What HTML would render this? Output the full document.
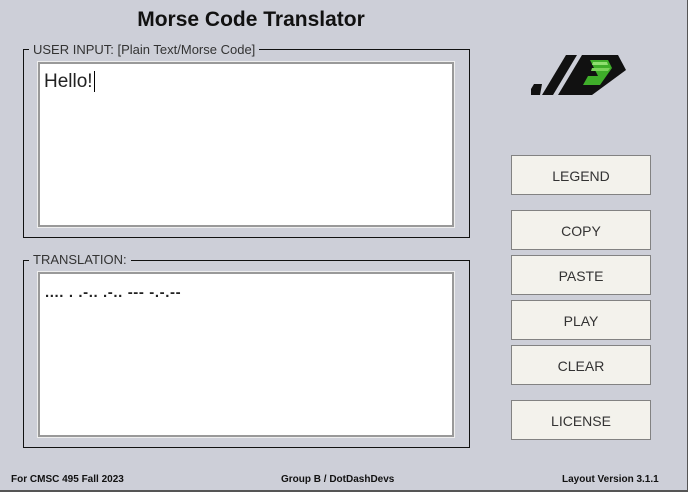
<!DOCTYPE html>
<html><head><style>
body{margin:0;width:688px;height:492px;background:#cdcfd8;font-family:"Liberation Sans",sans-serif;position:relative;overflow:hidden;box-sizing:border-box;border-right:1px solid #555;border-bottom:2px solid #555}
.a{position:absolute}
.title{left:0;width:502px;top:8px;text-align:center;font-weight:bold;font-size:21px;color:#111}
.grp{border:1.5px solid #111;box-sizing:border-box}
.lbl{background:#cdcfd8;font-size:13px;color:#333;padding:0 4px}
.box{background:#fff;border:2px solid #999;box-sizing:border-box;outline:1px solid #eee}
.btn{left:511px;width:140px;height:40px;background:#f3f2ec;border:1px solid #828282;box-sizing:border-box;text-align:center;line-height:40px;font-size:14px;color:#333}
.f{top:474px;font-size:10px;font-weight:bold;color:#111}
</style></head><body>
<div class="a title">Morse Code Translator</div>
<div class="a grp" style="left:23px;top:49px;width:447px;height:189px"></div>
<div class="a lbl" style="left:29px;top:42px">USER INPUT: [Plain Text/Morse Code]</div>
<div class="a box" style="left:38px;top:62px;width:416px;height:165px"></div>
<div class="a" style="left:44px;top:71px;font-size:19px;color:#222">Hello!<span style="border-left:1px solid #000;margin-left:1px"></span></div>
<div class="a grp" style="left:23px;top:260px;width:447px;height:188px"></div>
<div class="a lbl" style="left:29px;top:252px">TRANSLATION:</div>
<div class="a box" style="left:38px;top:272px;width:416px;height:165px"></div>
<div class="a" style="left:45px;top:284px;font-size:15px;font-weight:bold;color:#222;letter-spacing:0.6px">.... . .-.. .-.. --- -.-.--</div>
<svg class="a" style="left:525px;top:50px" width="105" height="50" viewBox="525 50 105 50">
<polygon points="534,84 542,84 540,95 531,95 531,89" fill="#111"/>
<polygon points="566,55 577,55 553,95 542,95" fill="#111"/>
<polygon points="582,55 618,55 626,70 592,95 558,95" fill="#111"/>
<polygon points="590,60 608,60 612,68 600,85 583,85 588,76 598,76" fill="#3fae2a"/>
<polygon points="593,62 607,62 608,65 592,65" fill="#8fe070"/>
<polygon points="592,68 610,68 608,71 591,71" fill="#7ad45a"/>
</svg>
<div class="a btn" style="top:155px">LEGEND</div>
<div class="a btn" style="top:210px">COPY</div>
<div class="a btn" style="top:255px">PASTE</div>
<div class="a btn" style="top:300px">PLAY</div>
<div class="a btn" style="top:345px">CLEAR</div>
<div class="a btn" style="top:400px">LICENSE</div>
<div class="a f" style="left:11px">For CMSC 495 Fall 2023</div>
<div class="a f" style="left:281px">Group B / DotDashDevs</div>
<div class="a f" style="left:562px">Layout Version 3.1.1</div>
</body></html>
